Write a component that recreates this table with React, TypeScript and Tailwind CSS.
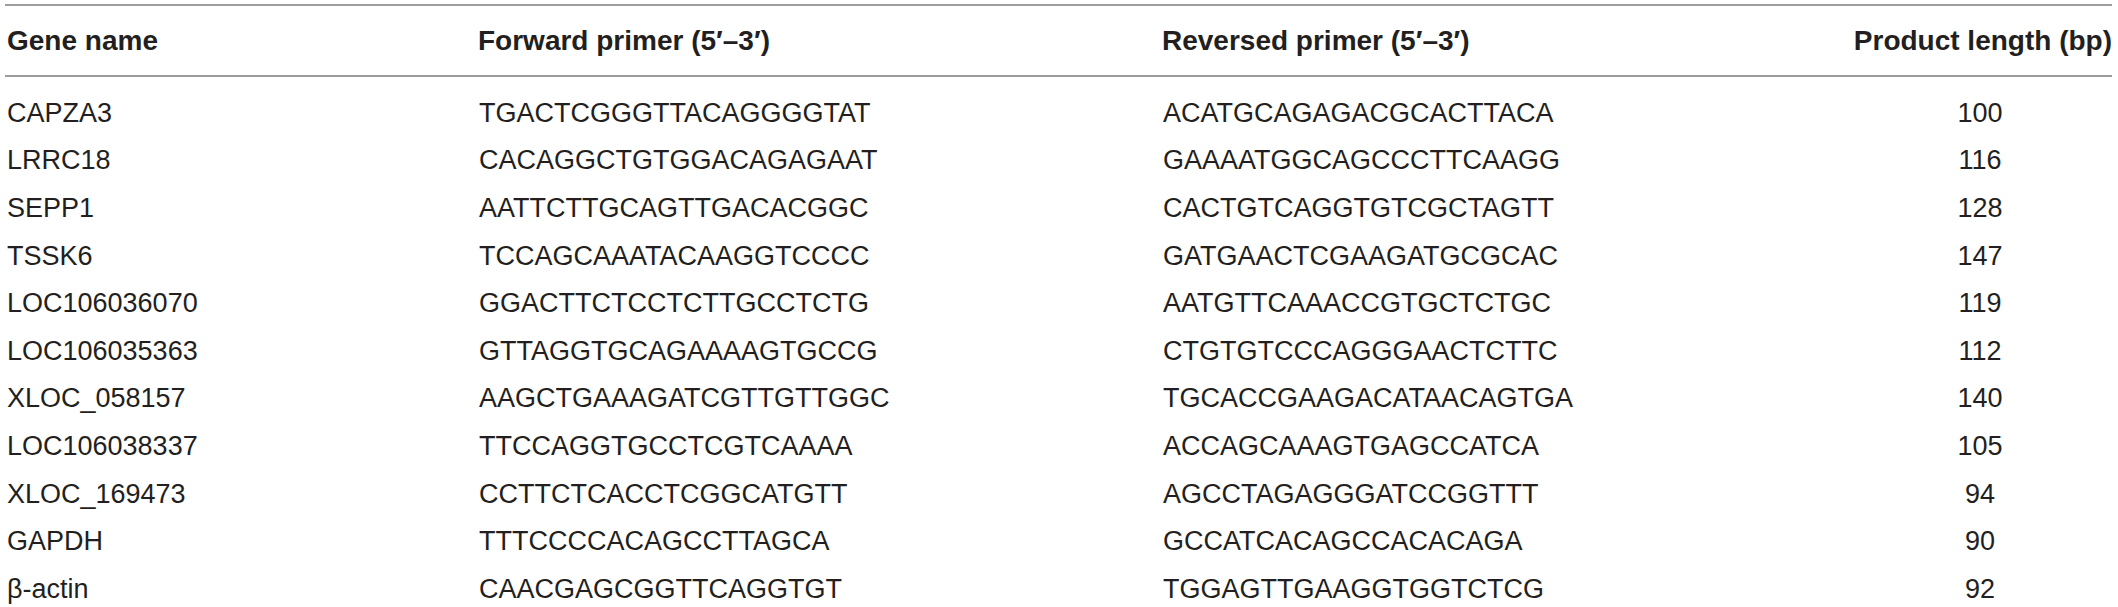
const rows: [string, string, string, string][] = [
  ["CAPZA3", "TGACTCGGGTTACAGGGGTAT", "ACATGCAGAGACGCACTTACA", "100"],
  ["LRRC18", "CACAGGCTGTGGACAGAGAAT", "GAAAATGGCAGCCCTTCAAGG", "116"],
  ["SEPP1", "AATTCTTGCAGTTGACACGGC", "CACTGTCAGGTGTCGCTAGTT", "128"],
  ["TSSK6", "TCCAGCAAATACAAGGTCCCC", "GATGAACTCGAAGATGCGCAC", "147"],
  ["LOC106036070", "GGACTTCTCCTCTTGCCTCTG", "AATGTTCAAACCGTGCTCTGC", "119"],
  ["LOC106035363", "GTTAGGTGCAGAAAAGTGCCG", "CTGTGTCCCAGGGAACTCTTC", "112"],
  ["XLOC_058157", "AAGCTGAAAGATCGTTGTTGGC", "TGCACCGAAGACATAACAGTGA", "140"],
  ["LOC106038337", "TTCCAGGTGCCTCGTCAAAA", "ACCAGCAAAGTGAGCCATCA", "105"],
  ["XLOC_169473", "CCTTCTCACCTCGGCATGTT", "AGCCTAGAGGGATCCGGTTT", "94"],
  ["GAPDH", "TTTCCCCACAGCCTTAGCA", "GCCATCACAGCCACACAGA", "90"],
  ["β-actin", "CAACGAGCGGTTCAGGTGT", "TGGAGTTGAAGGTGGTCTCG", "92"],
]

const cols = "grid grid-cols-[473px_684px_686px_264px]"

export default function App() {
  return (
    <div className="bg-white min-h-screen pt-[4px] font-['Liberation_Sans',Arial,sans-serif] text-[#231f20]">
      <div className="ml-[5px] w-[2107px]">
        {/* header */}
        <div className={`${cols} border-t-2 border-b-2 border-[#9d9d9d] pt-[21px] pb-[20px] text-[28px] leading-[28px] font-bold`}>
          <div className="pl-[2px]">Gene name</div>
          <div>Forward primer (5′–3′)</div>
          <div>Reversed primer (5′–3′)</div>
          <div className="text-right whitespace-nowrap">Product length (bp)</div>
        </div>

        <div className="pt-[12px] text-[27px]">
          {rows.map((r) => (
            <div key={r[0]} className={`${cols} h-[47.6px] items-center leading-[30px]`}>
              <div className="pl-[2px]">{r[0]}</div>
              <div className="pl-[1px]">{r[1]}</div>
              <div className="pl-[1px]">{r[2]}</div>
              <div className="text-center">{r[3]}</div>
            </div>
          ))}
        </div>
      </div>
    </div>
  )
}
